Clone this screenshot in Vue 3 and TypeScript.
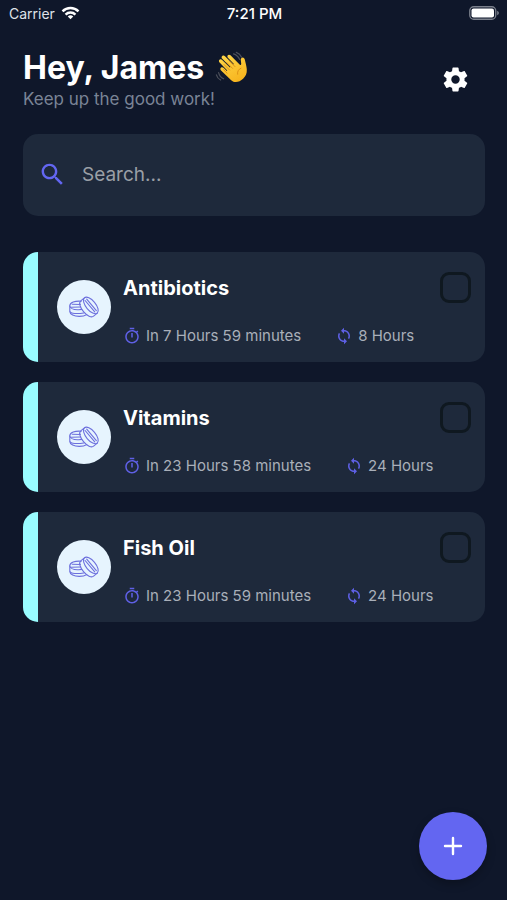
<script setup lang="ts">
import { ref } from 'vue'

interface Medicine {
  id: number
  name: string
  due: string
  every: string
  taken: boolean
}

const query = ref('')

const medicines = ref<Medicine[]>([
  { id: 1, name: 'Antibiotics', due: 'In 7 Hours 59 minutes', every: '8 Hours', taken: false },
  { id: 2, name: 'Vitamins', due: 'In 23 Hours 58 minutes', every: '24 Hours', taken: false },
  { id: 3, name: 'Fish Oil', due: 'In 23 Hours 59 minutes', every: '24 Hours', taken: false },
])
</script>

<template>
  <div class="screen">
    <div class="status">
      <div class="carrier">
        <span>Carrier</span>
        <svg class="wifi" viewBox="0 0 20 14" aria-hidden="true">
          <g fill="none" stroke="#fff" stroke-width="2.6">
            <path d="M1.6 5.2a12 12 0 0 1 16.8 0" />
            <path d="M4.8 8.6a7.5 7.5 0 0 1 10.4 0" />
          </g>
          <path d="M10 13.6 7.1 10.7a4.2 4.2 0 0 1 5.8 0z" fill="#fff" />
        </svg>
      </div>
      <span class="clock">7:21 PM</span>
      <svg class="battery" viewBox="0 0 31 14" aria-hidden="true">
        <rect x="0.75" y="0.75" width="26" height="12.5" rx="4" fill="none" stroke="#7b808c" stroke-width="1.3" />
        <rect x="2.5" y="2.5" width="22.5" height="9" rx="2" fill="#fff" />
        <path d="M28.2 4.8c2.2.9 2.2 3.5 0 4.4z" fill="#7b808c" />
      </svg>
    </div>

    <main class="content">
      <header class="header">
        <div>
          <h1 class="greeting">
            <span>Hey, James</span>
            <svg class="wave" viewBox="0 0 34 34" aria-hidden="true">
              <defs>
                <linearGradient id="skin" x1="0" y1="0" x2="0.6" y2="1">
                  <stop offset="0" stop-color="#ffd84a" />
                  <stop offset="1" stop-color="#f7b51f" />
                </linearGradient>
              </defs>
              <g fill="none" stroke="#4b4f5a" stroke-width="1.2" stroke-linecap="round">
                <path d="M18.5 2.8c2.8.8 4.9 2.7 6.2 5.6" />
                <path d="M21.3 1.4c2.4.8 4.2 2.4 5.3 4.8" />
                <path d="M3.6 21.6c.6 2.8 2.3 4.9 5 6.2" />
                <path d="M1.4 23.8c.6 2.4 2 4.1 4.2 5.2" />
              </g>
              <path
                fill="url(#skin)"
                d="M16.2 29.2 6.1 19.4c-1.9-1.9.5-4.3 2.4-2.6l3.3 3.1.5-.5-7.7-7.8c-1.9-2 .7-4.4 2.6-2.6l7.7 7.6.5-.5-8.1-8.3c-1.9-2 .8-4.5 2.7-2.6l8.3 8.4.6-.5-6-6.4c-1.7-2 .8-4.1 2.6-2.4l9.1 9.2c1.1 1 1.7.5 1.6-.9l-.4-3.4c-.3-3.3 3.3-3.9 4-.7.7 3.3 1.8 6.6 2 9.8.3 4.1-1.2 7.2-3.7 9.5-3.5 3.2-8.4 4.8-11.9 1.4z"
              />
              <g fill="none" stroke="#d98b13" stroke-width="0.9" stroke-linecap="round">
                <path d="m9.1 13.6 5.4 5.4M11.6 11.4l6 6M14.2 9.8l5.8 5.8M8.4 18.6l3.7 3.6" />
                <path d="M26 17.2c-2.7 1.2-3.7 3.2-3.4 6" />
              </g>
            </svg>
          </h1>
          <p class="tagline">Keep up the good work!</p>
        </div>
        <button class="settings" type="button" aria-label="Settings">
          <svg class="icon-large" viewBox="0 0 24 24" aria-hidden="true">
            <path
              fill="currentColor"
              d="M12,15.5A3.5,3.5 0 0,1 8.5,12A3.5,3.5 0 0,1 12,8.5A3.5,3.5 0 0,1 15.5,12A3.5,3.5 0 0,1 12,15.5M19.43,12.97C19.47,12.65 19.5,12.33 19.5,12C19.5,11.67 19.47,11.34 19.43,11L21.54,9.37C21.73,9.22 21.78,8.95 21.66,8.73L19.66,5.27C19.54,5.05 19.27,4.96 19.05,5.05L16.56,6.05C16.04,5.66 15.5,5.32 14.87,5.07L14.5,2.42C14.46,2.18 14.25,2 14,2H10C9.75,2 9.54,2.18 9.5,2.42L9.13,5.07C8.5,5.32 7.96,5.66 7.44,6.05L4.95,5.05C4.73,4.96 4.46,5.05 4.34,5.27L2.34,8.73C2.21,8.95 2.27,9.22 2.46,9.37L4.57,11C4.53,11.34 4.5,11.67 4.5,12C4.5,12.33 4.53,12.65 4.57,12.97L2.46,14.63C2.27,14.78 2.21,15.05 2.34,15.27L4.34,18.73C4.46,18.95 4.73,19.03 4.95,18.95L7.44,17.94C7.96,18.34 8.5,18.68 9.13,18.93L9.5,21.58C9.54,21.82 9.75,22 10,22H14C14.25,22 14.46,21.82 14.5,21.58L14.87,18.93C15.5,18.67 16.04,18.34 16.56,17.94L19.05,18.95C19.27,19.03 19.54,18.95 19.66,18.73L21.66,15.27C21.78,15.05 21.73,14.78 21.54,14.63L19.43,12.97Z"
            />
          </svg>
        </button>
      </header>

      <label class="search">
        <svg class="icon-large" viewBox="0 0 24 24" aria-hidden="true">
          <path
            fill="currentColor"
            d="M15.5 14h-.79l-.28-.27C15.41 12.59 16 11.11 16 9.5 16 5.91 13.09 3 9.5 3S3 5.91 3 9.5 5.91 16 9.5 16c1.61 0 3.09-.59 4.23-1.57l.27.28v.79l5 4.99L20.49 19l-4.99-5zm-6 0C7.01 14 5 11.99 5 9.5S7.01 5 9.5 5 14 7.01 14 9.5 11.99 14 9.5 14z"
          />
        </svg>
        <input v-model="query" class="search-input" type="text" placeholder="Search..." aria-label="Search" />
      </label>

      <ul class="list">
        <li v-for="item in medicines" :key="item.id" class="card">
          <div class="avatar">
            <svg class="pills" viewBox="0 0 32 26" aria-hidden="true">
              <g fill="none" stroke="#6c6fdd" stroke-width="1.1" stroke-linejoin="round" stroke-linecap="round">
                <path d="M13.2 7.2C7 6.6 1.8 8.7 1.8 11.8v5.4c0 3.2 4.4 5.2 9.4 5.2 3 0 5.7-.6 7.5-1.8" />
                <path d="M1.8 12c.6 2.7 4.6 3.9 9 3.7l3-.3" />
                <path d="M4.2 10.2 12.4 10.5M3 13.3 12.8 13" />
                <path d="M2 17.8c2 1.7 6 2.3 13.8 1.2" />
                <g transform="rotate(50 21 13)">
                  <ellipse cx="21" cy="10.6" rx="10" ry="4.8" />
                  <path d="M11 10.6v4.8c0 2.7 4.5 4.8 10 4.8s10-2.1 10-4.8v-4.8" />
                  <path d="M13.5 9.7h15M13.5 11.8h15" />
                </g>
              </g>
            </svg>
          </div>
          <div class="details">
            <h2 class="name">{{ item.name }}</h2>
            <div class="meta">
              <span class="meta-item">
                <svg class="icon-small" viewBox="0 0 24 24" aria-hidden="true">
                  <path
                    fill="currentColor"
                    d="M15 1H9v2h6V1zm-4 13h2V8h-2v6zm8.03-6.61l1.42-1.42c-.43-.51-.9-.99-1.41-1.41l-1.42 1.42C16.07 4.74 14.12 4 12 4c-4.97 0-9 4.03-9 9s4.02 9 9 9 9-4.03 9-9c0-2.12-.74-4.07-1.97-5.61zM12 20c-3.87 0-7-3.13-7-7s3.13-7 7-7 7 3.13 7 7-3.13 7-7 7z"
                  />
                </svg>
                <span>{{ item.due }}</span>
              </span>
              <span class="meta-item">
                <svg class="icon-small" viewBox="0 0 24 24" aria-hidden="true">
                  <path
                    fill="currentColor"
                    d="M12 4V1L8 5l4 4V6c3.31 0 6 2.69 6 6 0 1.01-.25 1.97-.7 2.8l1.46 1.46C19.54 15.03 20 13.57 20 12c0-4.42-3.58-8-8-8zm0 14c-3.31 0-6-2.69-6-6 0-1.01.25-1.97.7-2.8L5.24 7.74C4.46 8.97 4 10.43 4 12c0 4.42 3.58 8 8 8v3l4-4-4-4v3z"
                  />
                </svg>
                <span>{{ item.every }}</span>
              </span>
            </div>
          </div>
          <input v-model="item.taken" class="check" type="checkbox" :aria-label="item.name" />
        </li>
      </ul>
    </main>

    <button class="add" type="button" aria-label="Add">
      <svg class="plus" viewBox="0 0 20 20" aria-hidden="true">
        <path d="M10 2v16M2 10h16" fill="none" stroke="#fff" stroke-width="2.4" stroke-linecap="round" />
      </svg>
    </button>
  </div>
</template>

<style>
body {
  background: #0f172a;
}
</style>

<style scoped>
.screen {
  min-height: 100vh;
  background: #0f172a;
  color: #fff;
  font-family: Inter, 'Liberation Sans', sans-serif;
}

.status {
  display: grid;
  grid-template-columns: 1fr auto 1fr;
  align-items: center;
  height: 26px;
  padding: 0 7px 0 9px;
  font-size: 15px;
}

.carrier {
  display: flex;
  align-items: center;
  gap: 6px;
  color: #dfe2e8;
  font-size: 14px;
}

.wifi {
  width: 19px;
  height: 14px;
}

.clock {
  font-weight: 500;
}

.battery {
  width: 31px;
  height: 14px;
  justify-self: end;
}

.content {
  padding: 22px 22px 100px 23px;
}

.header {
  display: flex;
  align-items: center;
  justify-content: space-between;
  padding-right: 15px;
}

.greeting {
  display: flex;
  align-items: center;
  gap: 11px;
  margin: 0;
  font-size: 32px;
  font-weight: 700;
  line-height: 40px;
}

.wave {
  width: 34px;
  height: 34px;
}

.tagline {
  margin: 0;
  color: #7a8496;
  font-size: 17px;
  line-height: 22px;
}

.settings {
  display: flex;
  padding: 0;
  border: 0;
  background: none;
  color: #fff;
}

.icon-large {
  flex: none;
  width: 29px;
  height: 29px;
}

.search {
  display: flex;
  align-items: center;
  gap: 15px;
  height: 82px;
  margin-top: 24px;
  padding: 0 15px 2px;
  border-radius: 15px;
  background: #1e293b;
  color: #6366f1;
  box-sizing: border-box;
}

.search-input {
  flex: 1;
  min-width: 0;
  padding: 0;
  border: 0;
  outline: 0;
  background: none;
  color: #fff;
  font: inherit;
  font-size: 19px;
}

.search-input::placeholder {
  color: #9a9fa6;
  opacity: 1;
}

.list {
  display: flex;
  flex-direction: column;
  gap: 20px;
  margin: 36px 0 0;
  padding: 0;
  list-style: none;
}

.card {
  display: flex;
  align-items: flex-start;
  min-height: 110px;
  padding: 20px 14px 16px 19px;
  border-left: 15px solid #99fcff;
  border-radius: 15px;
  background: #1e293b;
  box-sizing: border-box;
}

.avatar {
  display: flex;
  flex: none;
  align-items: center;
  justify-content: center;
  width: 54px;
  height: 54px;
  margin-top: 8px;
  border-radius: 50%;
  background: #e6f4fe;
}

.pills {
  width: 32px;
  height: 26px;
}

.details {
  flex: 1;
  min-width: 0;
  padding-left: 12px;
}

.name {
  margin: 0 0 22px;
  font-size: 20px;
  font-weight: 700;
  line-height: 32px;
}

.meta {
  display: flex;
  gap: 34px;
  color: #a9afb9;
  font-size: 15px;
  line-height: 20px;
  white-space: nowrap;
}

.meta-item {
  display: flex;
  align-items: center;
  gap: 5px;
}

.icon-small {
  flex: none;
  width: 18px;
  height: 18px;
  color: #5f60e6;
}

.check {
  flex: none;
  width: 31px;
  height: 31px;
  margin: 0;
  border: 3px solid #0f1820;
  border-radius: 9px;
  appearance: none;
  box-sizing: border-box;
}

.check:checked {
  background: #6366f1;
}

.add {
  position: fixed;
  right: 20px;
  bottom: 20px;
  display: flex;
  align-items: center;
  justify-content: center;
  width: 68px;
  height: 68px;
  padding: 0;
  border: 0;
  border-radius: 50%;
  background: #6366f1;
  box-shadow: 0 4px 8px rgba(0, 0, 0, 0.25);
}

.plus {
  width: 20px;
  height: 20px;
}
</style>
